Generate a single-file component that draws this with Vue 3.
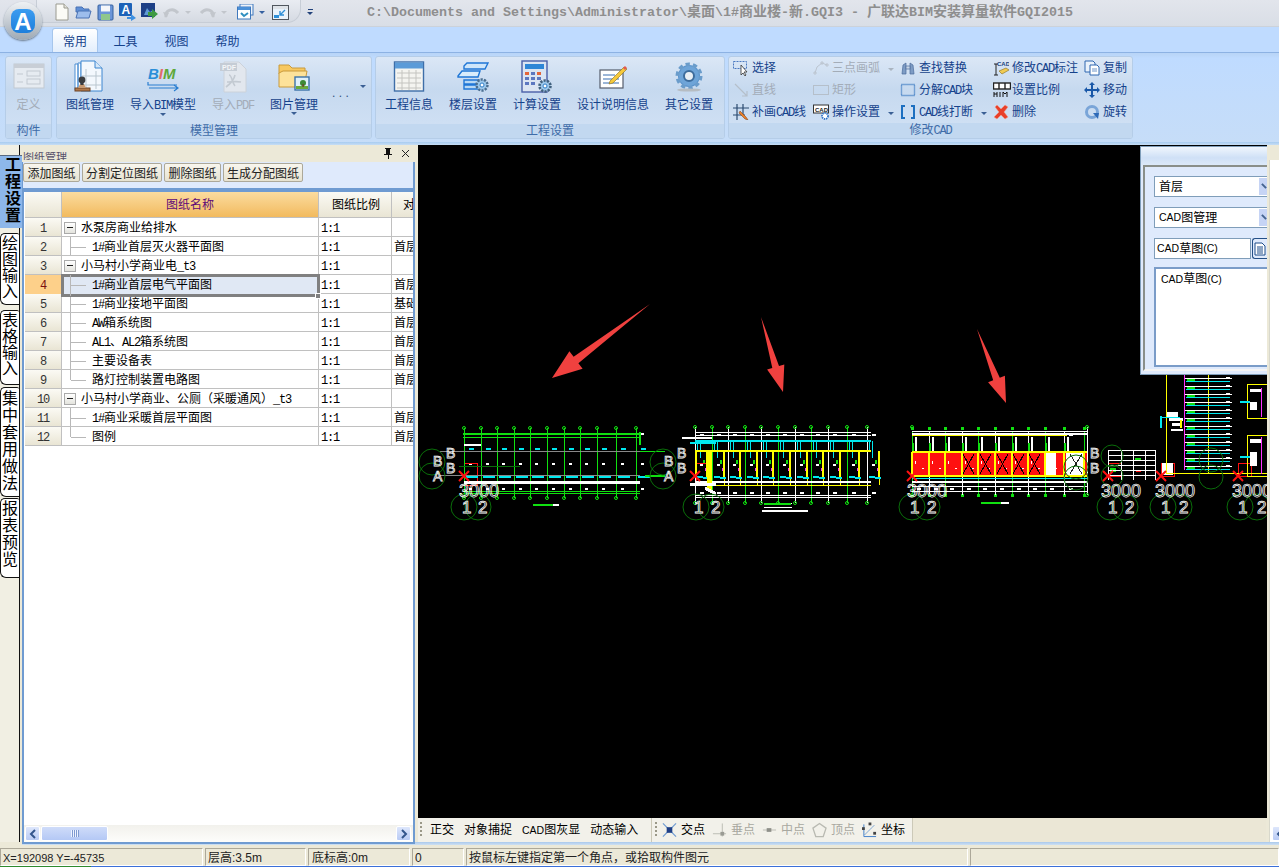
<template>
  <div class="app">
    <!-- title bar + quick access -->
    <header class="titlebar">
      <div class="orb"><span class="orb-a">A</span></div>
      <div class="qat">
        <svg width="16" height="18" viewBox="0 0 16 18"><path d="M2 1h8l4 4v12H2z" fill="#fbfbf6" stroke="#9a9a90"/><path d="M10 1v4h4" fill="#e4e4dc" stroke="#9a9a90"/></svg>
        <svg width="17" height="16" viewBox="0 0 17 16"><path d="M1 3h6l2 2h5v3H1z" fill="#5f8fd6" stroke="#4a72b4"/><path d="M1 14l2-7h13l-2 7z" fill="#9dbdec" stroke="#4a72b4"/></svg>
        <svg width="17" height="17" viewBox="0 0 17 17"><rect x="1" y="1" width="15" height="15" rx="1" fill="#6b95d8" stroke="#35609f"/><rect x="4" y="1.5" width="9" height="6" fill="#f4f6fa"/><rect x="4" y="10" width="9" height="6" fill="#8fc78d"/></svg>
        <svg width="17" height="18" viewBox="0 0 17 18"><rect x="0" y="0" width="13" height="13" rx="1" fill="#1c62b8"/><text x="2.5" y="11" class="qtxt">A</text><path d="M8 14h4v-3l5 4-5 3v-2H8z" fill="#3d8fe0"/></svg>
        <svg width="17" height="18" viewBox="0 0 17 18"><rect x="0" y="0" width="14" height="14" fill="#1d3f86"/><path d="M3 12l3-7 3 4 3-2v5z" fill="#5f9ad6"/><path d="M7 9h4V6l6 5-6 5v-3H7z" fill="#3f9a42"/></svg>
        <svg width="17" height="13" viewBox="0 0 17 13"><path d="M3 11C2 4 10 1 15 7" fill="none" stroke="#c2c6cc" stroke-width="3"/><path d="M0 6l6 1-3 5z" fill="#c2c6cc"/></svg>
        <i class="qdrop off"></i>
        <svg width="17" height="13" viewBox="0 0 17 13" class="gap-m"><path d="M14 11C15 4 7 1 2 7" fill="none" stroke="#c2c6cc" stroke-width="3"/><path d="M17 6l-6 1 3 5z" fill="#c2c6cc"/></svg>
        <i class="qdrop off"></i>
        <svg width="17" height="16" viewBox="0 0 17 16" class="gap-l"><rect x="3" y="0" width="13" height="11" fill="#eef3fa" stroke="#3f78bd"/><rect x="0.5" y="3" width="13" height="12" fill="#fff" stroke="#3f78bd"/><rect x="1" y="3" width="12" height="3" fill="#4b90d8"/><path d="M4 9l3 3 4-3" fill="none" stroke="#2f8fc0" stroke-width="2"/></svg>
        <i class="qdrop"></i>
        <svg width="17" height="15" viewBox="0 0 17 15" class="gap-s"><rect x="0.5" y="0.5" width="16" height="14" fill="#eaf3fb" stroke="#50565e"/><rect x="1" y="1" width="15" height="3" fill="#dfe3e8"/><rect x="2" y="10" width="5" height="3" fill="#2e8fd8"/><path d="M13 5L8 10M8 6v4h4" fill="none" stroke="#2e8fd8" stroke-width="1.4"/></svg>
      </div>
      <div class="qat-more"><i class="bar"></i><i class="qdrop dark"></i></div>
      <div class="wintitle"><T text="C:\Documents and Settings\Administrator\桌面\1#商业楼-新.GQI3 - 广联达BIM安装算量软件GQI2015" /></div>
    </header>

    <nav class="tabs">
      <span class="tab active">常用</span>
      <span class="tab">工具</span>
      <span class="tab">视图</span>
      <span class="tab">帮助</span>
    </nav>

    <section class="ribbon">
      <div class="group g-def">
        <div class="group-body">
          <div class="lbtn off">
            <svg width="32" height="32" viewBox="0 0 32 32"><rect x="1" y="3" width="30" height="24" fill="#e6ebf1" stroke="#c2c9d1"/><rect x="1" y="3" width="30" height="4" fill="#c8ced6"/><path d="M4 13h6M4 21h6" stroke="#c2c9d1"/><rect x="14" y="10" width="13" height="5" fill="none" stroke="#c2c9d1"/><rect x="14" y="18" width="13" height="5" fill="none" stroke="#c2c9d1"/></svg>
            <span class="lbl">定义</span>
          </div>
        </div>
        <div class="group-name">构件</div>
      </div>

      <div class="group g-model">
        <div class="group-body">
          <div class="lbtn">
            <svg width="32" height="32" viewBox="0 0 32 32"><path d="M1 3h3v26H1zM4 2h3v26H4z" fill="#fff" stroke="#4d8ed2"/><path d="M7 0h14l7 7v23H7z" fill="#f3f8fd" stroke="#3c86d0"/><path d="M21 0v7h7" fill="#d6e7f7" stroke="#3c86d0"/><path d="M12 8v20M22 10v18M8 15h19M8 24h19" stroke="#b9c6cf"/><rect x="1" y="27" width="15" height="3" fill="#b0784a" stroke="#6e4526"/><path d="M4 27l2-4h4l2 4z" fill="#c79a72"/><circle cx="8" cy="19" r="3.4" fill="#3b3d40"/><rect x="6.5" y="21" width="3" height="3" fill="#3b3d40"/></svg>
            <span class="lbl">图纸管理</span>
          </div>
          <div class="lbtn">
            <svg width="34" height="32" viewBox="0 0 34 32"><text x="2" y="18" class="bim"><tspan fill="#2a8ed8">B</tspan><tspan fill="#e46a6a">I</tspan><tspan fill="#5ea83a">M</tspan></text><path d="M2 21v3h29" fill="none" stroke="#2a7ed0" stroke-width="1.2"/><path d="M3 27h28M28 24l4 3-4 3" fill="none" stroke="#2a7ed0" stroke-width="1.2"/></svg>
            <span class="lbl"><T text="导入BIM模型" /></span>
            <i class="arr"></i>
          </div>
          <div class="lbtn off">
            <svg width="32" height="32" viewBox="0 0 32 32"><path d="M7 1h15l7 7v23H7z" fill="#e2e7ee" stroke="#ccd2da"/><rect x="3" y="2" width="17" height="8" fill="#c5ccd5"/><text x="5" y="9" class="pdf">PDF</text><path d="M12 14c3 0 3 8 6 11M18 14c-1 5-5 9-9 12M10 21c4 0 9-1 14 0" fill="none" stroke="#c3cad2" stroke-width="1.6"/></svg>
            <span class="lbl"><T text="导入PDF" /></span>
          </div>
          <div class="lbtn">
            <svg width="32" height="32" viewBox="0 0 32 32"><path d="M1 4h10l3 3h13v6H1z" fill="#f7c860" stroke="#c99a3c"/><path d="M1 26V12l4-2h24l-3 16z" fill="#fde29a" stroke="#c99a3c"/><rect x="17" y="16" width="14" height="13" fill="#dff0fa" stroke="#3c72a8" stroke-width="1.4"/><path d="M18 28v-3h12v3z" fill="#6aaa3c"/><circle cx="25" cy="22" r="3" fill="#3e8a36"/><rect x="24.4" y="23" width="1.4" height="3" fill="#6e4526"/></svg>
            <span class="lbl">图片管理</span>
            <i class="arr"></i>
          </div>
          <div class="more"><span>. . .</span><i class="arr"></i></div>
        </div>
        <div class="group-name">模型管理</div>
      </div>

      <div class="group g-proj">
        <div class="group-body">
          <div class="lbtn">
            <svg width="32" height="32" viewBox="0 0 32 32"><rect x="1.5" y="1" width="29" height="29" fill="#f4f4f0" stroke="#3e6ea8" stroke-width="1.4"/><rect x="2" y="1.5" width="28" height="6" fill="#5b9bd8"/><path d="M4 12h24M4 17h24M4 22h24M4 27h24M9 9v20M16 9v20M23 9v20" stroke="#c4c4c0"/></svg>
            <span class="lbl">工程信息</span>
          </div>
          <div class="lbtn">
            <svg width="32" height="32" viewBox="0 0 32 32"><path d="M7 5l3-3h21l-3 6H7z" fill="#cfe6fa" stroke="#1f76d6" stroke-width="1.4"/><path d="M1 15l4-5h18l-2 6H1z" fill="#d9ecfb" stroke="#1f76d6" stroke-width="1.4"/><path d="M7 19h15v4H7zM7 24h15v4H7z" fill="#b8d8f4" stroke="#1f76d6" stroke-width="1.4"/><circle cx="25" cy="24" r="5.5" fill="#9cc7ea" stroke="#4c6f90" stroke-width="2.4" stroke-dasharray="2.2 1.2"/><circle cx="25" cy="24" r="2" fill="#fff" stroke="#2f7fc8"/></svg>
            <span class="lbl">楼层设置</span>
          </div>
          <div class="lbtn">
            <svg width="32" height="34" viewBox="0 0 32 34"><rect x="1" y="1" width="25" height="31" fill="#dbe4f2" stroke="#4a5fa8" stroke-width="1.4"/><rect x="4" y="4" width="19" height="5" fill="#2f86d6"/><path d="M4 12h4v3H4z" fill="#e4653a"/><path d="M10 12h4v3h-4zM16 12h4v3h-4zM4 17h4v3H4zM10 17h4v3h-4zM16 17h4v3h-4zM4 22h4v3H4zM10 22h4v3h-4z" fill="#5d77c0"/><path d="M16 12h4v3h-4z" fill="#e4653a"/><circle cx="24" cy="26" r="5.5" fill="#9cc7ea" stroke="#41617f" stroke-width="2.6" stroke-dasharray="2.2 1.2"/><circle cx="24" cy="26" r="2" fill="#fff" stroke="#2f7fc8"/></svg>
            <span class="lbl">计算设置</span>
          </div>
          <div class="lbtn wide">
            <svg width="28" height="32" viewBox="0 0 28 32"><rect x="1" y="9" width="23" height="18" fill="#fff" stroke="#555d6c" stroke-width="1.2"/><path d="M4 14h12M4 18h16M4 22h16" stroke="#3b6fb0" stroke-width="1.2"/><path d="M11 20l14-14 3 2-14 14-4 1z" fill="#f5c93c" stroke="#8a6b1c" stroke-width=".6"/><path d="M24 7l2-2 2 2-2 2z" fill="#e25a52"/></svg>
            <span class="lbl">设计说明信息</span>
          </div>
          <div class="lbtn">
            <svg width="30" height="32" viewBox="0 0 30 32"><circle cx="15" cy="15" r="11" fill="#5a93cc" stroke="#6a9ccb" stroke-width="5" stroke-dasharray="4 2.9"/><circle cx="15" cy="15" r="10" fill="#6ea4d8"/><circle cx="15" cy="15" r="5" fill="#e8eef4" stroke="#3d6c9c" stroke-width="2"/><ellipse cx="15" cy="29" rx="12" ry="1.6" fill="#b6bcc2"/></svg>
            <span class="lbl">其它设置</span>
          </div>
        </div>
        <div class="group-name">工程设置</div>
      </div>

      <div class="group g-cad">
        <div class="sgrid">
          <div class="sbtn">
            <svg width="16" height="16" viewBox="0 0 16 16"><rect x="0.5" y="1.5" width="13" height="7" fill="none" stroke="#4a78c0" stroke-dasharray="2 1"/><path d="M8 5v10l2-2 2 3 1-1-2-3h3z" fill="#fff" stroke="#333" stroke-width=".8"/></svg>
            <span>选择</span>
          </div>
          <div class="sbtn off">
            <svg width="16" height="16" viewBox="0 0 16 16"><path d="M2 13l2-6 5-4 5 2M1 12h2v2H1zM8 2h2v2H8zM13 4h2v2h-2z" fill="none" stroke="#bcc5d0"/></svg>
            <span>三点画弧</span><i class="arr-s"></i>
          </div>
          <div class="sbtn">
            <svg width="16" height="16" viewBox="0 0 16 16"><path d="M2 14l1-9 3-2v11zM14 14l-1-9-3-2v11z" fill="#7e9cc4" stroke="#4c6c9c" stroke-width=".7"/><rect x="6" y="6" width="4" height="3" fill="#c9d6e6" stroke="#4c6c9c" stroke-width=".7"/></svg>
            <span>查找替换</span>
          </div>
          <div class="sbtn">
            <svg width="16" height="16" viewBox="0 0 16 16"><path d="M3 4v11M1 4h4M1 15h4" fill="none" stroke="#222" stroke-width="1"/><path d="M6 11l7-3 3 2-7 4z" fill="#f0cb52" stroke="#8a6b1c" stroke-width=".6"/><text x="4" y="6" class="tiny">CAD</text></svg>
            <span><T text="修改CAD标注" /></span>
          </div>
          <div class="sbtn">
            <svg width="16" height="16" viewBox="0 0 16 16"><path d="M1 1h8l2 2v9H1z" fill="#eaf2fb" stroke="#2f66b0"/><path d="M6 5h7l2 2v8H6z" fill="#fff" stroke="#2f66b0"/><path d="M8 9h5M8 11h5" stroke="#6f95c8"/></svg>
            <span>复制</span>
          </div>

          <div class="sbtn off">
            <svg width="16" height="16" viewBox="0 0 16 16"><path d="M2 2l12 12M14 9v5H9" fill="none" stroke="#b5bfca" stroke-width="1.2"/></svg>
            <span>直线</span>
          </div>
          <div class="sbtn off">
            <svg width="16" height="16" viewBox="0 0 16 16"><rect x="0.5" y="3.5" width="15" height="9" fill="none" stroke="#b5bfca"/></svg>
            <span>矩形</span>
          </div>
          <div class="sbtn">
            <svg width="16" height="16" viewBox="0 0 16 16"><rect x="1.5" y="2.5" width="13" height="11" fill="none" stroke="#1f66b8" stroke-dasharray="1 1" stroke-width="1.4"/></svg>
            <span><T text="分解CAD块" /></span>
          </div>
          <div class="sbtn">
            <svg width="18" height="16" viewBox="0 0 18 16"><rect x="0.5" y="1" width="17" height="6" fill="#fff" stroke="#222" stroke-width="1.4"/><path d="M6 1v6M12 1v6" stroke="#222" stroke-width="1.4"/><path d="M1 10v5M4 10v5M1 12h3M7 10v5M10 10l2 2 2-2v5M10 10v5" stroke="#111" fill="none"/></svg>
            <span class="s-tight">设置比例</span>
          </div>
          <div class="sbtn">
            <svg width="16" height="16" viewBox="0 0 16 16"><path d="M8 0l3 3H9v4h4V5l3 3-3 3V9H9v4h2l-3 3-3-3h2V9H3v2L0 8l3-3v2h4V3H5z" fill="#1a58a8"/></svg>
            <span>移动</span>
          </div>

          <div class="sbtn">
            <svg width="16" height="16" viewBox="0 0 16 16"><path d="M0 4h16M0 11h12M4 0v16M10 0v11" stroke="#2b4a70" stroke-width="1.2"/><path d="M7 7l6 6 2 3-3-1-6-6z" fill="#e8802c" stroke="#7a3a10" stroke-width=".5"/></svg>
            <span><T text="补画CAD线" /></span>
          </div>
          <div class="sbtn">
            <svg width="18" height="16" viewBox="0 0 18 16"><rect x="0.5" y="1" width="15" height="8" fill="#fff" stroke="#333"/><text x="2" y="7.5" class="tiny dark">CAD</text><circle cx="12" cy="12" r="3" fill="#fff" stroke="#2f73c8" stroke-width="1.8" stroke-dasharray="1.4 .8"/></svg>
            <span class="s-tight">操作设置</span><i class="arr-s"></i>
          </div>
          <div class="sbtn">
            <svg width="16" height="16" viewBox="0 0 16 16"><path d="M5 2H2v12h3M11 2h3v12h-3" fill="none" stroke="#1d6fc0" stroke-width="2"/></svg>
            <span><T text="CAD线打断" /></span><i class="arr-s"></i>
          </div>
          <div class="sbtn">
            <svg width="16" height="16" viewBox="0 0 16 16"><path d="M2 3l2-2 4 4 4-4 3 2-4 5 4 5-3 2-4-4-4 4-3-2 5-5z" fill="#e8402a" stroke="#f5a08c" stroke-width=".5"/></svg>
            <span>删除</span>
          </div>
          <div class="sbtn">
            <svg width="16" height="16" viewBox="0 0 16 16"><circle cx="8" cy="8" r="5.5" fill="none" stroke="#7aa5d8" stroke-width="3"/><path d="M9 9h6l-1 6z" fill="#2e6ab8"/></svg>
            <span>旋转</span>
          </div>
        </div>
        <div class="group-name"><T text="修改CAD" /></div>
      </div>
    </section>
    <div class="ribbon-edge"></div>

    <main class="work">
      <aside class="sidetabs">
        <div class="stab current">工程设置</div>
        <div class="stab s2">绘图输入</div>
        <div class="stab s3">表格输入</div>
        <div class="stab s4">集中套用做法</div>
        <div class="stab s5">报表预览</div>
      </aside>

      <div class="panel">
        <div class="panel-title">
          <span class="clipped">图纸管理</span>
          <svg width="10" height="11" viewBox="0 0 10 11"><path d="M3 0h5v1H7v5h2v1H6v4H5V7H1V6h2V1H2V0z" fill="#111"/></svg>
          <svg width="9" height="9" viewBox="0 0 9 9"><path d="M1 1l7 7M8 1l-7 7" stroke="#222"/></svg>
        </div>
        <div class="panel-tools">
          <button class="tbtn">添加图纸</button>
          <button class="tbtn">分割定位图纸</button>
          <button class="tbtn">删除图纸</button>
          <button class="tbtn">生成分配图纸</button>
        </div>
        <div class="grid-wrap">
          <div class="grid">
            <div class="row head">
              <div class="rh"></div>
              <div class="c-name hl">图纸名称</div>
              <div class="c-scale">图纸比例</div>
              <div class="c-floor">对应楼层</div>
            </div>
            <div v-for="r in drawings" :key="r.no" class="row" :class="{ sel: r.no === 4 }">
              <div class="rh"><T :text="String(r.no)" /></div>
              <div class="c-name" :class="r.kind">
                <i v-if="r.kind === 'parent'" class="minus"></i>
                <i v-else class="branch"></i>
                <T :text="r.name" />
                <i v-if="r.no === 4" class="handle"></i>
              </div>
              <div class="c-scale"><T text="1:1" /></div>
              <div class="c-floor">{{ r.floor }}</div>
            </div>
          </div>
          <div class="hscroll">
            <span class="sb-arrow"><svg width="8" height="10" viewBox="0 0 8 10"><path d="M6 1L2 5l4 4" fill="none" stroke="#33558c" stroke-width="2"/></svg></span>
            <span class="sb-thumb"><i></i></span>
            <span class="sb-arrow right"><svg width="8" height="10" viewBox="0 0 8 10"><path d="M2 1l4 4-4 4" fill="none" stroke="#33558c" stroke-width="2"/></svg></span>
          </div>
        </div>
      </div>

      <div class="view">
        <div class="canvas">
          <svg class="cad" width="849" height="673" viewBox="418 145 849 673">
            <g shape-rendering="crispEdges">
              <rect v-for="(b, i) in cad.rects" :key="'r' + i" :x="b.x" :y="b.y" :width="b.w" :height="b.h" :fill="b.f" :stroke="b.s" />
              <line v-for="(l, i) in cad.lines" :key="'l' + i" :x1="l.x1" :y1="l.y1" :x2="l.x2" :y2="l.y2" :stroke="l.c" :stroke-width="l.w" />
            </g>
            <circle v-for="(c, i) in cad.circles" :key="'c' + i" :cx="c.x" :cy="c.y" :r="c.r" fill="none" :stroke="c.c" />
            <path v-for="(x, i) in cad.crosses" :key="'x' + i" :d="`M${x - 5} 471l10 10M${x + 5} 471l-10 10`" stroke="#ff1010" stroke-width="2" />
            <text v-for="(t, i) in cad.texts" :key="'t' + i" :x="t.x" :y="t.y" :font-size="t.s" class="cadtxt">{{ t.t }}</text>
            <path d="M650 304L578.4 363.2L582.6 368.8L552 378L569.4 351.2L573.6 356.8Z" fill="#f0413f" />
            <path d="M761 317L779 366L784.3 364.5L783 392L767.1 369.5L772.3 368Z" fill="#f0413f" />
            <path d="M977 329L999.8 377.7L1004.9 375.7L1006 403L988.1 382.3L993.2 380.3Z" fill="#f0413f" />
          </svg>

          <div class="floater">
            <div class="float-cap"></div>
            <div class="float-body">
              <div class="fselect">首层<i></i></div>
              <div class="fselect"><T text="CAD图管理" sans /><i></i></div>
              <div class="frow">
                <div class="finput"><T text="CAD草图(C)" sans /></div>
                <span class="fbtn"><svg width="12" height="14" viewBox="0 0 12 14"><path d="M1 1h7l3 3v9H1z" fill="#fff" stroke="#1c4c8a"/><path d="M3 5h6M3 7h6M3 9h6M3 11h6" stroke="#1c4c8a"/></svg></span>
              </div>
              <div class="flist"><T text="CAD草图(C)" sans /></div>
            </div>
          </div>
        </div>

        <div class="snapbar">
          <div class="snap-a">
            <i class="grip"></i>
            <span>正交</span>
            <span>对象捕捉</span>
            <span><T text="CAD图灰显" sans /></span>
            <span>动态输入</span>
          </div>
          <div class="snap-b">
            <i class="grip"></i>
            <svg width="16" height="16" viewBox="0 0 16 16"><path d="M1 1l14 14M15 1L1 15" stroke="#6f9bd1" stroke-width="1.3"/><rect x="5" y="5" width="6" height="6" fill="#1f3f86"/></svg>
            <span class="sgap">交点</span>
            <svg width="16" height="16" viewBox="0 0 16 16"><path d="M1 12h14M11 1v14" stroke="#b9bab2"/><rect x="9" y="10" width="4" height="4" fill="#9a9b94"/></svg>
            <span class="sgap dim">垂点</span>
            <svg width="16" height="16" viewBox="0 0 16 16"><path d="M1 8h14" stroke="#b9bab2"/><rect x="5" y="6" width="5" height="4" fill="#8f908a"/></svg>
            <span class="sgap dim">中点</span>
            <svg width="16" height="16" viewBox="0 0 16 16"><path d="M8 1l7 5-3 9H4L1 6z" fill="none" stroke="#b9bab2" stroke-width="1.4"/></svg>
            <span class="sgap dim">顶点</span>
            <svg width="16" height="16" viewBox="0 0 16 16"><path d="M2 15V2M2 15h13" stroke="#3c7cc8"/><path d="M3 13L13 3" stroke="#3c7cc8" stroke-dasharray="2 1"/><rect x="0" y="5" width="3" height="3" fill="#444"/><rect x="7" y="0" width="3" height="3" fill="#444"/><rect x="12" y="10" width="3" height="3" fill="#444"/></svg>
            <span class="sgap">坐标</span>
          </div>
        </div>
      </div>

      <aside class="rightstrip">
        <div class="rs-tab"></div>
        <div class="rs-body"><span class="sb-arrow"><svg width="8" height="10" viewBox="0 0 8 10"><path d="M6 1L2 5l4 4" fill="none" stroke="#33558c" stroke-width="2"/></svg></span></div>
      </aside>
    </main>

    <div class="view-edge"></div>
    <footer class="status">
      <div class="cell c1">X=192098 Y=-45735</div>
      <div class="cell c2">层高:3.5m</div>
      <div class="cell c3">底标高:0m</div>
      <div class="cell c4">0</div>
      <div class="cell c5">按鼠标左键指定第一个角点，或拾取构件图元</div>
      <div class="cell c6"></div>
    </footer>
  </div>
</template>

<script setup>
import { h } from 'vue';

// SimSun-style widths: ascii runs are half of the CJK em
const T = (props) => props.text.split(/([\x20-\x7e]+)/).filter(Boolean).map((s) =>
  /^[\x20-\x7e]/.test(s) ? h('span', { class: props.sans ? 'asc-s' : 'asc' }, s) : h('span', { class: 'cjk' }, s));
T.props = { text: String, sans: Boolean };

const drawings = [
  { no: 1, name: '水泵房商业给排水', kind: 'parent', floor: '' },
  { no: 2, name: '1#商业首层灭火器平面图', kind: 'child', floor: '首层' },
  { no: 3, name: '小马村小学商业电_t3', kind: 'parent', floor: '' },
  { no: 4, name: '1#商业首层电气平面图', kind: 'child', floor: '首层' },
  { no: 5, name: '1#商业接地平面图', kind: 'child', floor: '基础层' },
  { no: 6, name: 'AW箱系统图', kind: 'child', floor: '首层' },
  { no: 7, name: 'AL1、AL2箱系统图', kind: 'child', floor: '首层' },
  { no: 8, name: '主要设备表', kind: 'child', floor: '首层' },
  { no: 9, name: '路灯控制装置电路图', kind: 'child last', floor: '首层' },
  { no: 10, name: '小马村小学商业、公厕（采暖通风）_t3', kind: 'parent', floor: '' },
  { no: 11, name: '1#商业采暖首层平面图', kind: 'child', floor: '首层' },
  { no: 12, name: '图例', kind: 'child last', floor: '首层' },
];

// the drawing itself: free canvas, coordinates are page pixels
const buildCad = () => {
  const lines = [], rects = [], circles = [], texts = [], crosses = [];
  const G = '#10e010', W = '#ffffff', Y = '#ffff00', C = '#00e8f0', M = '#ff30ff', D = '#0a6e0a', R = '#ff1010';
  const L = (x1, y1, x2, y2, c, w = 1) => lines.push({ x1, y1, x2, y2, c, w });
  const B = (x, y, w, h, f, s = 'none') => rects.push({ x, y, w, h, f, s });
  const bubbles = (x, d = 14) => {
    circles.push({ x, y: 507, r: 13, c: D }, { x: x + d, y: 507, r: 13, c: D });
    texts.push({ x: x - 2, y: 513, s: 17, t: '1' }, { x: x + d, y: 513, s: 17, t: '2' });
  };
  const axis = (x) => {
    circles.push({ x, y: 462, r: 13, c: D }, { x, y: 476, r: 13, c: D });
    texts.push({ x: x + 1, y: 466, s: 14, t: 'B' }, { x: x + 1, y: 481, s: 14, t: 'A' });
    texts.push({ x: x + 14, y: 458, s: 14, t: 'B' }, { x: x + 14, y: 473, s: 14, t: 'B' });
  };
  const cols = (ox) => Array.from({ length: 11 }, (_, i) => Math.round(ox + i * 16.6) + (i > 8 ? (i - 8) * 3 : 0));
  const ticks = (xs, y1, y2) => xs.forEach((x) => {
    circles.push({ x, y: y1, r: 1.5, c: G }, { x, y: y2, r: 1.5, c: G });
  });

  // first plan
  let xs = cols(464);
  xs.forEach((x) => {
    L(x, 428, x, 498, G);
    B(x + 5, 433, 3, 2, W); B(x + 5, 463, 3, 2, W); B(x + 5, 488, 3, 2, W);
    B(x + 5, 448, 5, 2, C); L(x + 2, 477, x + 14, 477, C, 2);
  });
  ticks(xs, 428, 498);
  L(463, 434, 640, 434, G, 2); L(463, 437, 640, 437, G);
  L(463, 491, 640, 491, G); L(463, 493, 640, 493, G);
  L(440, 451, 640, 451, '#888888'); L(440, 475, 640, 475, '#888888');
  L(464, 482, 640, 482, W, 3); L(640, 432, 640, 445, G, 2);
  L(640, 451, 665, 451, G); L(645, 476, 665, 476, G, 2);
  L(464, 445, 481, 445, W, 2); L(459, 466, 520, 466, D);
  B(464, 463, 13, 22, 'none', R);
  crosses.push(464);
  L(533, 505, 553, 505, G, 2); L(553, 505, 559, 505, W, 2);
  axis(432); axis(663);
  bubbles(464);
  texts.push({ x: 459, y: 497, s: 18, t: '3000' });

  // second plan
  xs = cols(695);
  xs.forEach((x, i) => {
    L(x, 427, x, 503, i % 2 ? G : W);
    B(x + 5, 434, 4, 2, W); B(x + 5, 464, 3, 2, W); B(x + 5, 492, 4, 2, W);
    L(x + 2, 441, x + 2, 451, C); L(x + 5, 441, x + 5, 458, C);
    L(x + 12, 451, x + 12, 477, Y, 2); L(x + 12, 477, x + 12, 485, Y);
    L(x + 2, 477, x + 14, 478, C, 2);
    B(x + 10, 468, 2, 3, M); B(x + 8, 460, 2, 4, G);
  });
  ticks(xs, 427, 503);
  L(695, 432, 871, 432, W); L(695, 435, 871, 435, W); L(695, 441, 871, 441, C, 2);
  L(695, 451, 871, 451, Y, 2); L(695, 485, 871, 485, Y); L(695, 482, 871, 482, W, 2);
  L(695, 495, 871, 495, W); L(695, 497, 871, 497, W);
  L(709, 451, 709, 490, Y, 5); L(696, 451, 696, 476, Y, 2);
  L(682, 438, 712, 438, W, 2); L(690, 443, 716, 443, C, 2);
  L(690, 484, 716, 484, W, 3); L(705, 488, 716, 494, W, 3);
  B(696, 463, 13, 22, 'none', R);
  crosses.push(695);
  L(764, 504, 791, 504, G, 2); L(791, 503, 792, 503, W); L(764, 507, 792, 507, W, 1);
  L(762, 511, 808, 511, W, 2);
  bubbles(696, 15);

  // third plan, hatched red
  xs = cols(912);
  B(912, 452, 175, 24, R);
  B(1045, 452, 11, 24, W); B(1066, 452, 19, 24, W);
  xs.forEach((x, i) => {
    L(x, 431, x, 495, i % 2 ? W : G);
    B(x - 1, 427, 3, 3, G); B(x - 1, 494, 3, 3, G);
    if (i < 10) {
      B(x + 5, 434, 4, 2, W); B(x + 5, 488, 4, 2, W);
      L(x + 4, 437, x + 4, 451, W, 2); L(x + 1, 443, x + 1, 451, G, 2);
      L(x + 3, 461, x + 3, 464, W); L(x + 10, 468, x + 12, 468, W);
    }
    L(x, 452, x, 476, Y, 2);
  });
  [961, 978, 995, 1011, 1027].forEach((x) => {
    L(x + 2, 454, x + 13, 474, '#000000'); L(x + 13, 454, x + 2, 474, '#000000');
  });
  L(1070, 454, 1082, 474, '#202020'); L(1082, 454, 1070, 474, '#202020');
  L(912, 431, 1087, 431, W); L(912, 434, 1087, 434, W, 2); L(912, 435, 1067, 435, Y, 1);
  L(912, 452, 1087, 452, Y, 2); L(912, 476, 1087, 476, Y, 2); L(912, 478, 1087, 478, C);
  L(912, 482, 1087, 482, W, 2); L(912, 486, 1087, 486, W); L(912, 491, 1087, 491, W);
  L(1087, 427, 1087, 495, W);
  ticks([912, 1087], 427, 495);
  crosses.push(912);
  L(981, 503, 1001, 503, G, 2); L(1001, 503, 1009, 503, W, 2);
  circles.push({ x: 1076, y: 467, r: 12, c: D }, { x: 1076, y: 478, r: 12, c: D });
  texts.push({ x: 1090, y: 458, s: 14, t: 'B' }, { x: 1090, y: 473, s: 14, t: 'B' });
  bubbles(912, 15);
  texts.push({ x: 907, y: 497, s: 18, t: '3000' });

  // remaining sheets at the right
  for (let y = 450; y < 480; y += 5) L(1108, y, 1155, y, W);
  [1108, 1121, 1133, 1145, 1155].forEach((x) => L(x, 450, x, 480, W));
  B(1110, 468, 6, 4, G); B(1135, 458, 6, 3, G); B(1136, 470, 5, 2, R);
  [1108, 1161, 1238].forEach((x) => crosses.push(x));
  [1108, 1161, 1238].forEach((x) => B(x, 463, 13, 13, 'none', R));
  circles.push({ x: 1112, y: 456, r: 11, c: D }, { x: 1112, y: 476, r: 11, c: D }, { x: 1211, y: 460, r: 12, c: D }, { x: 1211, y: 477, r: 12, c: D });
  B(1162, 463, 11, 12, W);
  [[1110, 15], [1163, 16], [1240, 17]].forEach(([x, d]) => bubbles(x, d));
  [1101, 1155, 1232].forEach((x) => texts.push({ x, y: 497, s: 18, t: '3000' }));

  L(1166, 370, 1166, 473, Y); L(1166, 473, 1267, 473, Y);
  L(1184, 370, 1184, 470, M); L(1208, 370, 1208, 473, Y);
  for (let y = 378; y < 470; y += 8) {
    L(1185, y, 1232, y, W, 1); L(1186, y + 3, 1230, y + 3, C, 1);
    B(1187, y + 1, 8, 2, G); B(1226, y - 1, 4, 2, W);
  }
  B(1167, 412, 11, 5, W); B(1169, 418, 14, 3, W); L(1161, 416, 1161, 428, C, 2); L(1162, 417, 1180, 417, C);
  B(1172, 423, 10, 3, W); L(1181, 420, 1181, 428, Y, 2); B(1171, 429, 12, 2, W);
  B(1247, 384, 20, 34, 'none', Y); B(1247, 435, 20, 41, 'none', Y);
  B(1250, 389, 12, 3, W); B(1250, 402, 7, 8, W); B(1250, 439, 12, 4, W); B(1250, 452, 7, 14, W);
  L(1261, 388, 1261, 417, M); L(1261, 437, 1261, 474, M);
  L(1240, 402, 1250, 402, C, 2); L(1240, 457, 1250, 457, C, 2);
  return { lines, rects, circles, texts, crosses };
};
const cad = buildCad();
</script>

<style scoped>
.app { width: 1279px; height: 867px; display: flex; flex-direction: column; overflow: hidden; background: #ece9d8; color: #000; font: 12px/1 "Liberation Sans", "Noto Sans CJK SC", sans-serif; position: relative; }

/* title bar */
.titlebar { height: 27px; flex: none; display: flex; align-items: flex-start; background: linear-gradient(#e2e5ec, #d9dee6); position: relative; border-bottom: 1px solid #ccd2da; box-sizing: border-box; }
.orb { position: absolute; left: 4px; top: 2px; width: 38px; height: 38px; border-radius: 50%; background: linear-gradient(#eef1f4, #9ea9b4); box-shadow: 0 1px 2px #6a7888; display: flex; align-items: center; justify-content: center; z-index: 2; }
.orb-a { width: 24px; height: 24px; border-radius: 8px; background: linear-gradient(#3b9cf0, #1d7fdc); color: #fff; font: bold 24px/25px "Liberation Sans", sans-serif; text-align: center; }
.qat { margin-left: 36px; padding: 2px 0 0 17px; width: 246px; height: 20px; display: flex; align-items: center; gap: 5px; background: linear-gradient(#e9ecf2, #d5dae2); border: 1px solid #c7cdd6; border-top: none; border-radius: 0 0 14px 0; box-sizing: content-box; }
.gap-s { margin-left: 2px; }
.gap-m { margin-left: 3px; }
.gap-l { margin-left: 5px; }
.qdrop { width: 0; height: 0; border: 3px solid transparent; border-top: 3px solid #35609f; border-bottom: 0; }
.qdrop.off { border-top-color: #c2c6cc; }
.qat-more { margin-left: 6px; padding-top: 9px; display: flex; flex-direction: column; align-items: center; gap: 2px; }
.qat-more .bar { width: 5px; height: 1px; background: #22427a; }
.qdrop.dark { border-top-color: #22427a; }
.wintitle { position: absolute; left: 367px; top: 3px; line-height: 14px; white-space: nowrap; }

.tabs { height: 25px; flex: none; display: flex; background: #bfdbff; padding-left: 52px; box-sizing: border-box; align-items: flex-end; }
.tab { width: 51px; height: 24px; text-align: center; line-height: 28px; color: #15428b; font-size: 12px; box-sizing: border-box; overflow: hidden; }
.tab.active { width: 46px; margin-right: 2px; background: linear-gradient(#fff, #e2eefc); border: 1px solid #a6c6ec; border-bottom: none; border-radius: 3px 3px 0 0; line-height: 27px; }

/* ribbon */
.ribbon { height: 90px; flex: none; box-sizing: border-box; display: flex; gap: 3px; padding: 3px 0 3px 5px; background: linear-gradient(#b8d4f6, #bfdbff 6%, #c6ddf8); border-top: 1px solid #8db2e3; }
.group { display: flex; flex-direction: column; border: 1px solid #b5cde8; border-radius: 3px; background: linear-gradient(#dbe7f6, #c6d9ef 40%, #d2e2f5); overflow: hidden; box-sizing: border-box; }
.group-body { flex: 1; display: flex; gap: 16px; }
.group-name { height: 15px; flex: none; background: #c2d8f0; color: #3f6ca8; text-align: center; line-height: 14px; }
.g-def { width: 47px; margin-right: 1px; }
.g-def .group-body { justify-content: center; }
.g-model { width: 316px; }
.g-model .group-body { padding-left: 9px; }
.g-proj { width: 350px; }
.g-proj .group-body { padding-left: 9px; }
.g-cad { width: 405px; }
.lbtn { position: relative; display: flex; flex-direction: column; align-items: center; color: #15428b; padding-top: 3px; height: 67px; box-sizing: border-box; }
.lbtn svg { height: 34px; flex: none; }
.lbtn.off, .off { color: #a3acb8; }
.lbl { margin-top: 4px; white-space: nowrap; line-height: 14px; }
.arr { width: 0; height: 0; border: 3px solid transparent; border-top: 3px solid #3a5f94; border-bottom: 0; margin-top: 0; display: block; }
.more { color: #34517e; padding-top: 30px; margin-left: -2px; white-space: nowrap; display: flex; gap: 11px; height: 20px; }
.more .arr { position: relative; top: -2px; }
.bim { font: italic bold 15px "Liberation Sans", sans-serif; }
.pdf { font: bold 7px "Liberation Sans", sans-serif; fill: #f4f6f8; }
.qtxt { font: bold 12px "Liberation Sans", sans-serif; fill: #fff; }
.tiny { font: bold 6px "Liberation Sans", sans-serif; fill: #1a3f80; }
.tiny.dark { fill: #222; }

.sgrid { flex: 1; display: grid; grid-template-columns: 80px 87px 93px 91px 46px; grid-template-rows: repeat(3, 22px); padding: 0 0 0 4px; }
.sbtn { display: flex; align-items: center; gap: 3px; color: #15428b; white-space: nowrap; }
.sbtn svg { flex: none; }
.sbtn.off { color: #a3acb8; }
.s-tight { margin-left: -2px; }
.arr-s { width: 0; height: 0; border: 3px solid transparent; border-top: 3px solid #3a5f94; border-bottom: 0; margin-left: 5px; margin-top: 2px; }
.off .arr-s { border-top-color: #aab4c0; }

.ribbon-edge { height: 3px; flex: none; background: linear-gradient(#a7cbf0, #c7def5); }

.work { flex: 1; min-height: 0; display: flex; }

/* left vertical tabs */
.sidetabs { width: 20px; flex: none; display: flex; flex-direction: column; padding-top: 10px; background: #f1efe3; border-right: 1px solid #111; box-sizing: border-box; position: relative; z-index: 1; }
.stab { width: 19px; flex: none; border: 1px solid #111; border-right: none; background: #fff; border-radius: 5px 2px 0 6px; writing-mode: vertical-rl; text-orientation: upright; font: 16px/18px "Noto Sans CJK SC", sans-serif; box-sizing: border-box; }
.current { width: 22px; height: 73px; background: #8db7ea; font-weight: bold; border: none; border-top: 1px solid #5a6a80; border-radius: 0; letter-spacing: 1px; margin-bottom: 5px; }
.s2 { height: 72px; padding-top: 1px; margin-bottom: 5px; }
.s3 { height: 75px; padding-top: 1px; margin-bottom: 2px; }
.s4 { height: 110px; padding-top: 2px; letter-spacing: 1px; margin-bottom: 1px; }
.s5 { height: 80px; padding-top: 1px; letter-spacing: 1px; }

/* drawing list panel */
.panel { width: 395px; flex: none; display: flex; flex-direction: column; padding-left: 2px; box-sizing: border-box; background: #ece9d8; margin-bottom: -2px; position: relative; }
.panel-title { height: 17px; flex: none; display: flex; align-items: center; justify-content: flex-end; gap: 8px; padding-right: 5px; background: #ece9d8; position: relative; overflow: hidden; }
.clipped { position: absolute; left: 1px; top: 7px; height: 8px; overflow: hidden; font-size: 11px; line-height: 11px; color: #55506a; }
.panel-tools { height: 26px; flex: none; background: #dfeafc; display: flex; gap: 2px; padding-top: 1px; align-items: flex-start; box-sizing: border-box; border-left: 1px solid #6f9bd1; border-right: 2px solid #6f9bd1; }
.tbtn { height: 19px; padding: 0; border: 1px solid #aca899; border-radius: 2px; background: linear-gradient(#f8f6ee, #e6e2d0); font: 12px/1 "Noto Sans CJK SC", sans-serif; color: #222; width: 57px; }
.tbtn:nth-child(even) { width: 80px; }
.grid-wrap { flex: 1; min-height: 0; display: flex; flex-direction: column; border: 2px solid #6f9bd1; border-top-width: 4px; background: #fff; overflow: hidden; }
.grid { flex: 1; min-height: 0; padding-left: 1px; overflow: hidden; }
.row { display: grid; grid-template-columns: 37px 257px 73px 1fr; height: 19px; border-bottom: 1px solid #c0c0c0; box-sizing: border-box; line-height: 20px; font-size: 12px; white-space: nowrap; }
.row > div { border-right: 1px solid #c0c0c0; position: relative; overflow: hidden; box-sizing: border-box; }
.row > div:last-child { border-right: none; }
.head { height: 26px; line-height: 27px; }
.head .rh, .head .c-scale, .head .c-floor { background: linear-gradient(#fbfaf4, #e9e5d4); }
.head .c-scale { text-align: center; }
.head .c-floor { padding-left: 11px; }
.hl { background: linear-gradient(#fbdc9f, #f2ba5e); color: #5e0a78; text-align: center; }
.rh { background: linear-gradient(#fbfaf4, #e9e5d4); text-align: center; color: #333; }
.c-scale { padding-left: 2px; }
.c-floor { padding-left: 2px; }
.parent { padding-left: 19px; }
.child { padding-left: 30px; }
.minus { position: absolute; left: 2px; top: 4px; width: 10px; height: 10px; border: 1px solid #aaa; background: linear-gradient(#fff, #e4e4de); }
.minus::after { content: ""; position: absolute; left: 2px; right: 2px; top: 4px; height: 1px; background: #222; }
.branch { position: absolute; left: 8px; top: 0; bottom: 0; width: 15px; border-left: 1px solid #b8b8b8; }
.branch::after { content: ""; position: absolute; left: 0; right: 0; top: 10px; height: 1px; background: #b8b8b8; }
.last .branch { bottom: 8px; }
.sel .rh { background: #fdd08a; color: #7c1010; }
.sel .c-name { background: #e0e8f4; outline: 3px solid #808080; outline-offset: -2px; overflow: visible; z-index: 1; }
.handle { position: absolute; right: -3px; bottom: -3px; width: 4px; height: 4px; background: #808080; border: 1px solid #fff; }
.hscroll { height: 17px; flex: none; display: flex; gap: 1px; padding: 1px 2px 1px 1px; background: linear-gradient(#f2f1ec, #fdfdfb); box-sizing: border-box; }
.sb-arrow { width: 15px; height: 15px; flex: none; display: flex; align-items: center; justify-content: center; background: linear-gradient(#dde6fb, #b9cbf5); border: 1px solid #fff; border-radius: 2px; box-sizing: border-box; }
.sb-arrow.right { margin-left: auto; }
.sb-thumb { width: 67px; display: flex; align-items: center; justify-content: center; background: linear-gradient(#cfdcf9, #b4c8f5); border: 1px solid #fff; border-radius: 2px; box-sizing: border-box; }
.sb-thumb i { width: 8px; height: 7px; background: repeating-linear-gradient(90deg, #eef3ff 0 1px, #7f9ad0 1px 2px); }

/* cad view */
.view { flex: 1; min-width: 0; display: flex; flex-direction: column; margin-left: 3px; }
.canvas { height: 673px; flex: none; background: #000; position: relative; overflow: hidden; }
.cad { display: block; }
.cadtxt { fill: none; stroke: #fff; stroke-width: .75px; font-family: "Liberation Sans", sans-serif; }
.floater { position: absolute; right: 0; top: 1px; width: 127px; height: 229px; background: #dfeafc; border: 1px solid #7f9db9; border-right: none; box-sizing: border-box; display: flex; flex-direction: column; }
.float-cap { height: 18px; flex: none; background: linear-gradient(#f0f6fd, #cfe0f6 60%, #dce9f9); }
.float-body { flex: 1; border: 2px solid #8a8f8a; border-right: none; border-bottom-color: #f4f4f4; margin-left: 2px; margin-bottom: 3px; padding: 9px 0 2px 9px; display: flex; flex-direction: column; gap: 10px; background: #dfeafc; box-sizing: border-box; }
.fselect { height: 21px; flex: none; background: #fff; border: 1px solid #7f9db9; display: flex; align-items: center; padding-left: 4px; position: relative; box-sizing: border-box; border-right: none; }
.fselect i { position: absolute; right: 0; top: 1px; bottom: 1px; width: 8px; background: #c6d4f5; }
.fselect i::after { content: ""; position: absolute; left: 2px; top: 7px; width: 6px; height: 2px; background: #44638f; transform: rotate(45deg); }
.frow { display: flex; height: 21px; flex: none; margin-bottom: -2px; }
.finput { width: 100px; background: #fff; border: 1px solid #7f9db9; display: flex; align-items: center; padding-left: 2px; box-sizing: border-box; }
.fbtn { width: 14px; background: #dfeafc; border: 1px solid #234f86; border-right: none; border-radius: 3px 0 0 3px; display: flex; align-items: center; justify-content: center; margin-left: 1px; overflow: hidden; }
.flist { flex: 1; background: #fff; border: 2px solid #7a9cc8; border-right: none; padding: 4px 5px; box-sizing: border-box; }

.snapbar { flex: 1; display: flex; background: #ebe7d6; box-sizing: border-box; }
.snap-a, .snap-b { display: flex; align-items: center; height: 100%; background: #f2f1ea; border-right: 1px solid #ccc9b8; box-sizing: border-box; }
.snap-a { width: 234px; gap: 10px; padding-left: 2px; }
.snap-a .grip { margin-right: -2px; }
.snap-b { width: 261px; }
.grip { width: 2px; height: 16px; flex: none; background: repeating-linear-gradient(#9a9888 0 2px, transparent 2px 4px); }
.snap-b .grip { margin-left: 3px; margin-right: 5px; }
.sgap { margin: 0 7px 0 4px; white-space: nowrap; }
.dim { color: #a8a8a0; }

.rightstrip { width: 13px; flex: none; margin-left: -1px; display: flex; flex-direction: column; background: #ece9d8; padding-left: 3px; box-sizing: border-box; }
.rs-tab { height: 15px; flex: none; }
.rs-body { flex: 1; background: #fff; display: flex; align-items: flex-end; padding: 0 0 1px 2px; overflow: hidden; border-left: 1px solid #d8d8cc; }

.view-edge { height: 3px; flex: none; margin-left: 22px; background: linear-gradient(#a9c9ec, #cfe0f2); }
.status { height: 22px; flex: none; display: flex; gap: 2px; background: #ece9d8; padding-top: 3px; border-bottom: 1px solid #3a6fd8; border-image: linear-gradient(90deg, #2e8b2e 92px, #3a6fd8 92px) 1; box-sizing: border-box; }
.cell { height: 18px; border: 1px solid #aca899; border-bottom-color: #fff; border-right-color: #fff; line-height: 18px; padding-left: 2px; white-space: nowrap; overflow: hidden; box-sizing: border-box; color: #222; }
.c1 { width: 203px; font-size: 11px; }
.c2 { width: 101px; }
.c3 { width: 102px; padding-left: 3px; }
.c4 { width: 52px; }
.c5 { width: 502px; }
.c6 { flex: 1; }
</style>

<style>
html, body { margin: 0; overflow: hidden; }
/* bitmap SimSun ascii is half an em wide */
.asc { font-family: "Liberation Mono", monospace; font-size: 12px; letter-spacing: -1.2px; }
.asc-s { font-family: "Liberation Sans", sans-serif; font-size: 10.5px; }
.wintitle .asc { font: bold 13.33px/14px "Liberation Mono", monospace; letter-spacing: 0; color: #8e8e8e; }
.wintitle .cjk { font: bold 14px/14px "Noto Sans CJK SC", sans-serif; color: #8e8e8e; }
</style>
